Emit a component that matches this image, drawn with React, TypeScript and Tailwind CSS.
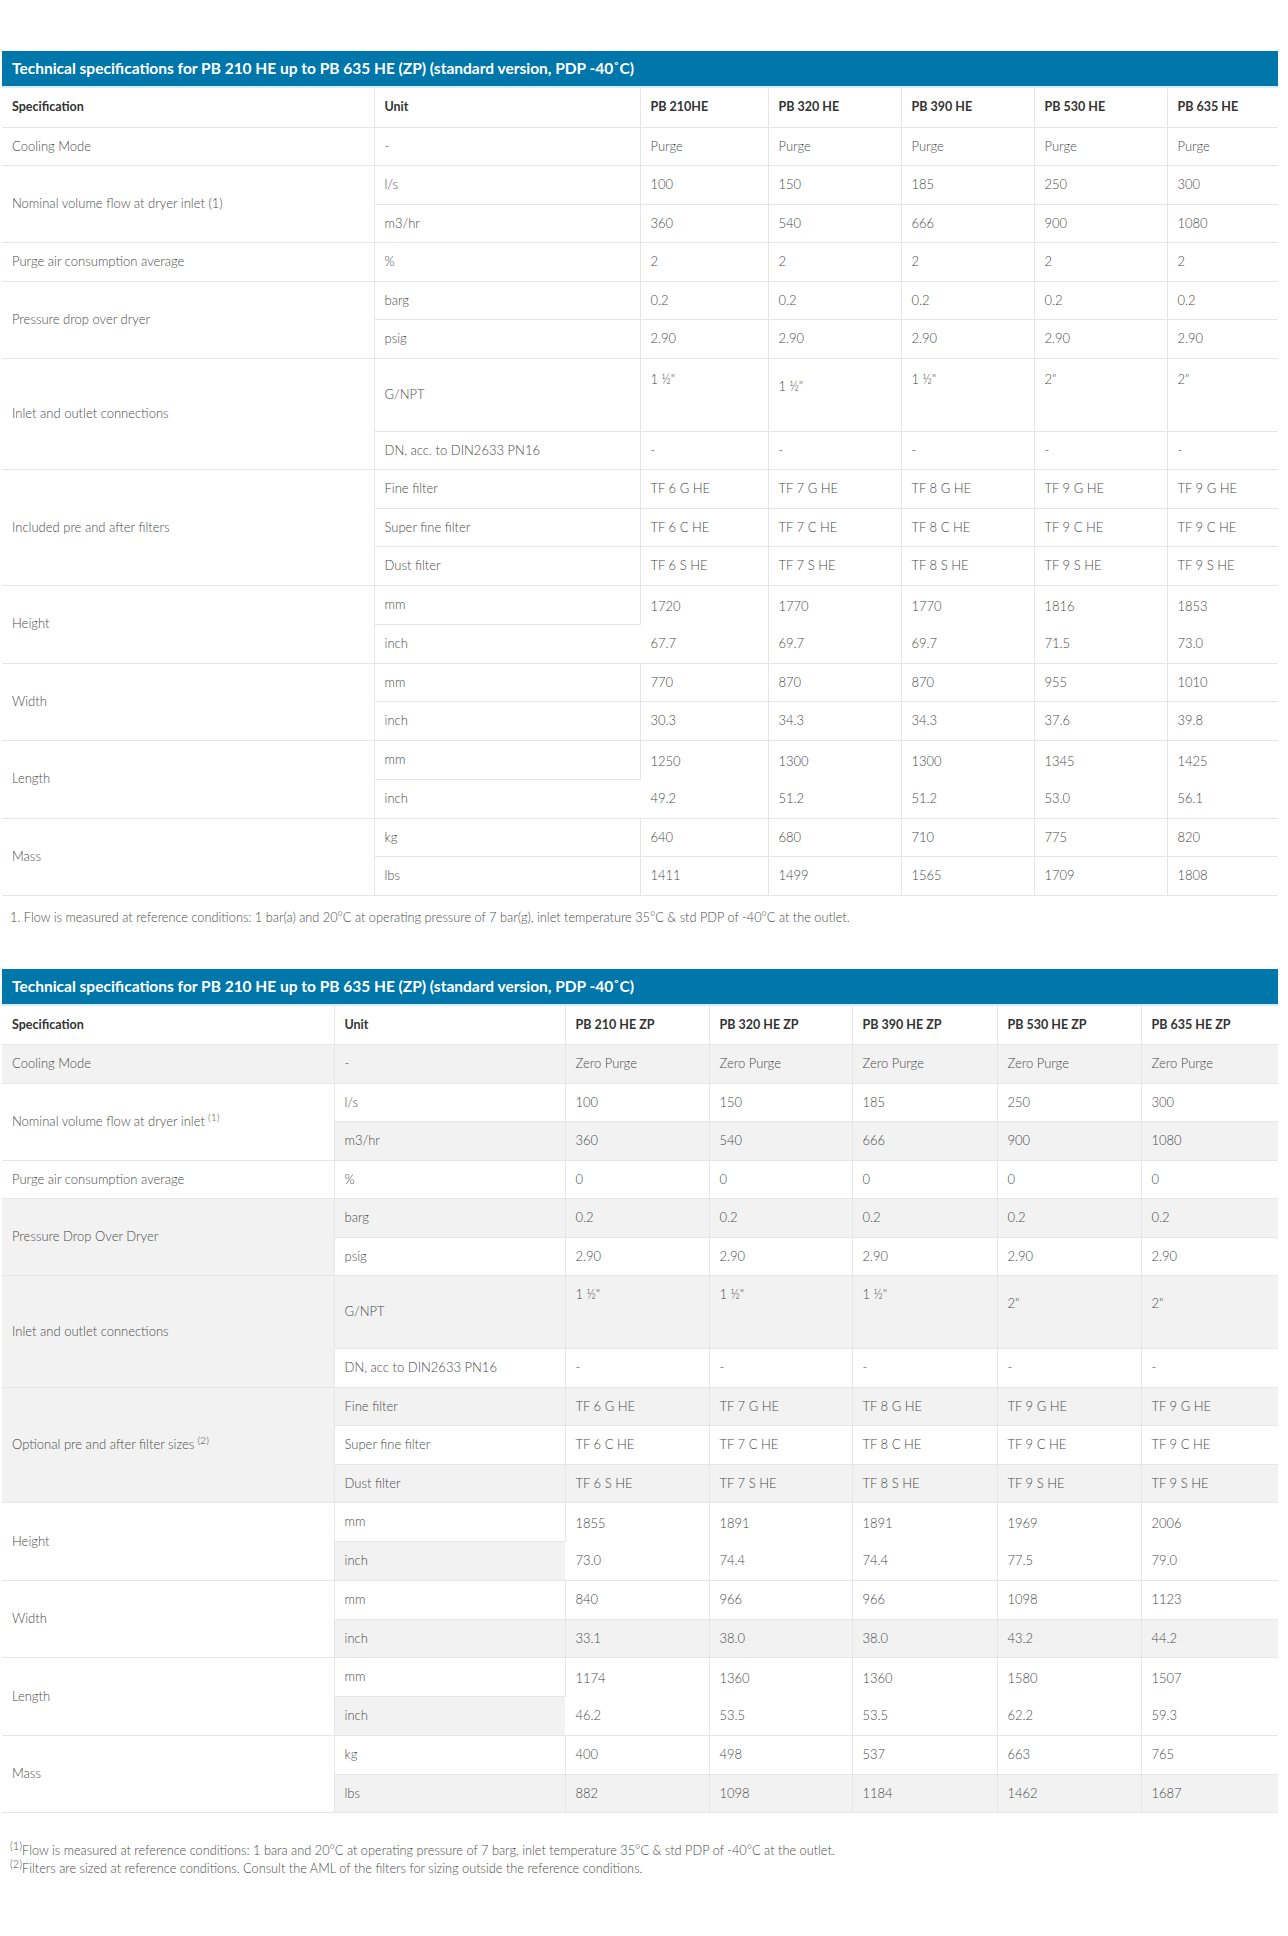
// Two technical spec tables for PB HE dryers (purge / zero purge).

type Row = { unit: string; values: string[] }
type Group = {
  spec: string
  note?: string
  rows: Row[]
  stacked?: boolean // values of both rows sit in one rowspan cell
  tall?: number[] // G/NPT row: top offset per value
}

const PURGE: Group[] = [
  { spec: 'Cooling Mode', rows: [{ unit: '-', values: ['Purge', 'Purge', 'Purge', 'Purge', 'Purge'] }] },
  {
    spec: 'Nominal volume flow at dryer inlet (1)',
    rows: [
      { unit: 'l/s', values: ['100', '150', '185', '250', '300'] },
      { unit: 'm3/hr', values: ['360', '540', '666', '900', '1080'] },
    ],
  },
  { spec: 'Purge air consumption average', rows: [{ unit: '%', values: ['2', '2', '2', '2', '2'] }] },
  {
    spec: 'Pressure drop over dryer',
    rows: [
      { unit: 'barg', values: ['0.2', '0.2', '0.2', '0.2', '0.2'] },
      { unit: 'psig', values: ['2.90', '2.90', '2.90', '2.90', '2.90'] },
    ],
  },
  {
    spec: 'Inlet and outlet connections',
    tall: [0, 1, 0, 0, 0],
    rows: [
      { unit: 'G/NPT', values: ['1 ½"', '1 ½"', '1 ½"', '2"', '2"'] },
      { unit: 'DN, acc. to DIN2633 PN16', values: ['-', '-', '-', '-', '-'] },
    ],
  },
  {
    spec: 'Included pre and after filters',
    rows: [
      { unit: 'Fine filter', values: ['TF 6 G HE', 'TF 7 G HE', 'TF 8 G HE', 'TF 9 G HE', 'TF 9 G HE'] },
      { unit: 'Super fine filter', values: ['TF 6 C HE', 'TF 7 C HE', 'TF 8 C HE', 'TF 9 C HE', 'TF 9 C HE'] },
      { unit: 'Dust filter', values: ['TF 6 S HE', 'TF 7 S HE', 'TF 8 S HE', 'TF 9 S HE', 'TF 9 S HE'] },
    ],
  },
  {
    spec: 'Height',
    stacked: true,
    rows: [
      { unit: 'mm', values: ['1720', '1770', '1770', '1816', '1853'] },
      { unit: 'inch', values: ['67.7', '69.7', '69.7', '71.5', '73.0'] },
    ],
  },
  {
    spec: 'Width',
    rows: [
      { unit: 'mm', values: ['770', '870', '870', '955', '1010'] },
      { unit: 'inch', values: ['30.3', '34.3', '34.3', '37.6', '39.8'] },
    ],
  },
  {
    spec: 'Length',
    stacked: true,
    rows: [
      { unit: 'mm', values: ['1250', '1300', '1300', '1345', '1425'] },
      { unit: 'inch', values: ['49.2', '51.2', '51.2', '53.0', '56.1'] },
    ],
  },
  {
    spec: 'Mass',
    rows: [
      { unit: 'kg', values: ['640', '680', '710', '775', '820'] },
      { unit: 'lbs', values: ['1411', '1499', '1565', '1709', '1808'] },
    ],
  },
]

const ZERO: Group[] = [
  { spec: 'Cooling Mode', rows: [{ unit: '-', values: Array(5).fill('Zero Purge') }] },
  {
    spec: 'Nominal volume flow at dryer inlet',
    note: '(1)',
    rows: [
      { unit: 'l/s', values: ['100', '150', '185', '250', '300'] },
      { unit: 'm3/hr', values: ['360', '540', '666', '900', '1080'] },
    ],
  },
  { spec: 'Purge air consumption average', rows: [{ unit: '%', values: ['0', '0', '0', '0', '0'] }] },
  {
    spec: 'Pressure Drop Over Dryer',
    rows: [
      { unit: 'barg', values: ['0.2', '0.2', '0.2', '0.2', '0.2'] },
      { unit: 'psig', values: ['2.90', '2.90', '2.90', '2.90', '2.90'] },
    ],
  },
  {
    spec: 'Inlet and outlet connections',
    tall: [2, 2, 2, 1, 1],
    rows: [
      { unit: 'G/NPT', values: ['1 ½"', '1 ½"', '1 ½"', '2"', '2"'] },
      { unit: 'DN, acc to DIN2633 PN16', values: ['-', '-', '-', '-', '-'] },
    ],
  },
  {
    spec: 'Optional pre and after filter sizes',
    note: '(2)',
    rows: [
      { unit: 'Fine filter', values: ['TF 6 G HE', 'TF 7 G HE', 'TF 8 G HE', 'TF 9 G HE', 'TF 9 G HE'] },
      { unit: 'Super fine filter', values: ['TF 6 C HE', 'TF 7 C HE', 'TF 8 C HE', 'TF 9 C HE', 'TF 9 C HE'] },
      { unit: 'Dust filter', values: ['TF 6 S HE', 'TF 7 S HE', 'TF 8 S HE', 'TF 9 S HE', 'TF 9 S HE'] },
    ],
  },
  {
    spec: 'Height',
    stacked: true,
    rows: [
      { unit: 'mm', values: ['1855', '1891', '1891', '1969', '2006'] },
      { unit: 'inch', values: ['73.0', '74.4', '74.4', '77.5', '79.0'] },
    ],
  },
  {
    spec: 'Width',
    rows: [
      { unit: 'mm', values: ['840', '966', '966', '1098', '1123'] },
      { unit: 'inch', values: ['33.1', '38.0', '38.0', '43.2', '44.2'] },
    ],
  },
  {
    spec: 'Length',
    stacked: true,
    rows: [
      { unit: 'mm', values: ['1174', '1360', '1360', '1580', '1507'] },
      { unit: 'inch', values: ['46.2', '53.5', '53.5', '62.2', '59.3'] },
    ],
  },
  {
    spec: 'Mass',
    rows: [
      { unit: 'kg', values: ['400', '498', '537', '663', '765'] },
      { unit: 'lbs', values: ['882', '1098', '1184', '1462', '1687'] },
    ],
  },
]

const TITLE = 'Technical specifications for PB 210 HE up to PB 635 HE (ZP) (standard version, PDP -40˚C)'

const CELL = 'border-b border-[#e6e6e6] px-[10px] py-0 text-left align-middle'
// offsets for the G/NPT values (0: first table normal, 1: lower, 2: second table top)
const TALL_PAD = ['pt-[11px]', 'pt-[18px]', 'pt-[9px]']

function SpecTable({
  widths,
  models,
  groups,
  striped,
}: {
  widths: number[]
  models: string[]
  groups: Group[]
  striped?: boolean
}) {
  let idx = 0
  const bg = (i: number) => (striped && i % 2 === 1 ? 'bg-[#f2f2f2]' : 'bg-white')
  const edge = (c: number) => (c < 4 ? 'border-r' : '')
  const body: React.ReactNode[] = []

  groups.forEach((g, gi) => {
    const spec = (
      <>
        {g.spec}
        {g.note && <sup className="ml-[3px] text-[10.5px]">{g.note}</sup>}
      </>
    )
    if (g.stacked) {
      const a = ++idx
      const b = ++idx
      body.push(
        <tr key={`${gi}-a`}>
          <td rowSpan={2} className={`${CELL} ${bg(a)} border-r`}>{spec}</td>
          <td className={`${CELL} ${bg(a)} h-[38.5px] border-r`}>{g.rows[0].unit}</td>
          {g.rows[0].values.map((v, c) => (
            <td key={c} rowSpan={2} className={`${CELL} ${bg(a)} ${edge(c)}`}>
              <div className="flex h-[38.5px] items-center pt-[3px]">{v}</div>
              <div className="flex h-[38.5px] items-center">{g.rows[1].values[c]}</div>
            </td>
          ))}
        </tr>,
        <tr key={`${gi}-b`}>
          <td className={`${CELL} ${bg(b)} h-[38.5px]`}>{g.rows[1].unit}</td>
        </tr>,
      )
      return
    }
    g.rows.forEach((r, j) => {
      const i = ++idx
      const tall = g.tall && j === 0
      body.push(
        <tr key={`${gi}-${j}`}>
          {j === 0 && (
            <td rowSpan={g.rows.length} className={`${CELL} ${bg(i)} border-r`}>
              {spec}
            </td>
          )}
          <td className={`${CELL} ${bg(i)} border-r ${tall ? 'h-[73px]' : 'h-[38.5px]'}`}>{r.unit}</td>
          {r.values.map((v, c) => (
            <td
              key={c}
              className={`${CELL} ${bg(i)} ${edge(c)} ${tall ? `align-top ${TALL_PAD[g.tall![c]]}` : ''}`}
            >
              {v}
            </td>
          ))}
        </tr>,
      )
    })
  })

  return (
    <div>
      <div className="flex h-[35px] items-center bg-[#0077aa] px-[10px] text-[15.5px] font-bold text-white">
        {TITLE}
      </div>
      <div className="h-[2px] bg-[#d6ecf6]" />
      <table className="w-full table-fixed border-collapse text-[13px] font-light text-[#4a4a4a]">
        <colgroup>
          {widths.map((w, i) => (
            <col key={i} style={{ width: w }} />
          ))}
        </colgroup>
        <thead>
          <tr>
            {['Specification', 'Unit', ...models].map((h, c) => (
              <th
                key={h}
                className={`${CELL} h-[39px] text-[12.5px] font-bold text-[#333] ${c < 6 ? 'border-r' : ''}`}
              >
                {h}
              </th>
            ))}
          </tr>
        </thead>
        <tbody>{body}</tbody>
      </table>
    </div>
  )
}

export default function App() {
  return (
    <div className="min-h-[1936px] bg-white pt-[51px] font-['Lato',sans-serif]">
      <div className="ml-[2px] w-[1276px]">
        <SpecTable
          widths={[372, 266, 128, 133, 133, 133, 111]}
          models={['PB 210HE', 'PB 320 HE', 'PB 390 HE', 'PB 530 HE', 'PB 635 HE']}
          groups={PURGE}
        />
        <p className="mt-[12px] px-[8px] text-[12.75px] font-light text-[#4a4a4a]">
          1. Flow is measured at reference conditions: 1 bar(a) and 20°C at operating pressure of 7 bar(g), inlet
          temperature 35°C &amp; std PDP of -40°C at the outlet.
        </p>

        <div className="mt-[42px]">
          <SpecTable
            widths={[332, 231, 144, 143, 145, 144, 137]}
            models={['PB 210 HE ZP', 'PB 320 HE ZP', 'PB 390 HE ZP', 'PB 530 HE ZP', 'PB 635 HE ZP']}
            groups={ZERO}
            striped
          />
        </div>
        <div className="mt-[28px] px-[8px] text-[12.75px] leading-[18px] font-light text-[#4a4a4a]">
          <p>
            <sup className="text-[11px]">(1)</sup>Flow is measured at reference conditions: 1 bara and 20°C at
            operating pressure of 7 barg, inlet temperature 35°C &amp; std PDP of -40°C at the outlet.
          </p>
          <p>
            <sup className="text-[11px]">(2)</sup>Filters are sized at reference conditions. Consult the AML of the
            filters for sizing outside the reference conditions.
          </p>
        </div>
      </div>
    </div>
  )
}
